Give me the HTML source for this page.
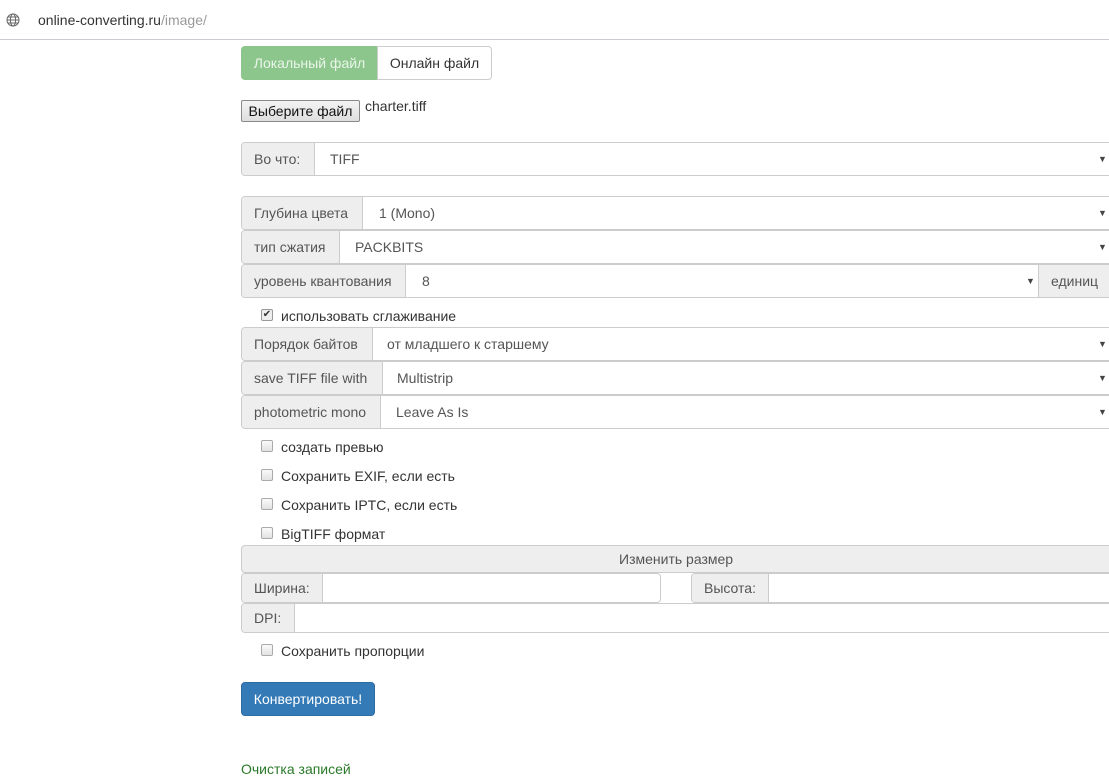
<!DOCTYPE html>
<html><head><meta charset="utf-8"><style>
*{box-sizing:border-box;margin:0;padding:0}
body{width:1109px;height:766px;overflow:hidden;background:#fff;font-family:"Liberation Sans",Arial,sans-serif;font-size:14px;color:#333;position:relative}
.a{position:absolute}
.bar{left:0;top:0;width:1109px;height:40px;border-bottom:1px solid #c8ccd0;background:#fff}
.row{position:absolute;left:241px;width:880px;height:34px;border:1px solid #ccc;border-radius:4px;overflow:hidden;background:#fff;color:#555}
.row .ad{position:absolute;left:0;top:0;bottom:0;background:#eee;border-right:1px solid #ccc;padding-left:12px;line-height:32px}
.row .v{position:absolute;top:0;line-height:32px}
.row .ar{position:absolute;top:0;line-height:32px;font-size:9px;color:#444}
.cb{position:absolute;left:261px;width:12px;height:12px;border:1px solid #aaa;border-radius:2px;background:linear-gradient(#fafafa,#e2e2e2)}
.lb{position:absolute;left:281px;color:#333}
</style></head><body>
<div class="a bar"></div>
<svg class="a" style="left:6px;top:13px" width="14" height="14" viewBox="0 0 14 14" fill="none" stroke="#666" stroke-width="1"><circle cx="7" cy="7" r="6"/><ellipse cx="7" cy="7" rx="2.6" ry="6"/><path d="M1 7h12M2 4h10M2 10h10"/></svg>
<div class="a" style="left:38px;top:12px;font-size:14px;color:#333">online-converting.ru<span style="color:#999">/image/</span></div>

<div class="a" style="left:241px;top:46px;width:137px;height:34px;background:#8cc68c;border-radius:4px 0 0 4px;color:#eaf5ea;line-height:34px;text-align:center">Локальный файл</div>
<div class="a" style="left:377px;top:46px;width:115px;height:34px;border:1px solid #ccc;border-radius:0 4px 4px 0;line-height:32px;text-align:center;color:#333">Онлайн файл</div>

<div class="a" style="left:241px;top:100px;width:119px;height:22px;border:1px solid #8a8a8a;background:linear-gradient(#f4f4f4,#dedede);line-height:20px;text-align:center;color:#111;border-radius:2px">Выберите файл</div>
<div class="a" style="left:365px;top:98px;color:#333">charter.tiff</div>

<div class="row" style="top:142px"><div class="ad" style="width:73px">Во что:</div><div class="v" style="left:88px">TIFF</div><div class="ar" style="left:856px">▼</div></div>
<div class="row" style="top:196px"><div class="ad" style="width:121px">Глубина цвета</div><div class="v" style="left:137px">1 (Mono)</div><div class="ar" style="left:856px">▼</div></div>
<div class="row" style="top:230px"><div class="ad" style="width:98px">тип сжатия</div><div class="v" style="left:113px">PACKBITS</div><div class="ar" style="left:856px">▼</div></div>
<div class="row" style="top:264px"><div class="ad" style="width:164px">уровень квантования</div><div class="v" style="left:180px">8</div><div class="ar" style="left:784px">▼</div><div class="ad" style="left:796px;width:90px;border-left:1px solid #ccc;border-right:none">единиц</div></div>

<div class="a" style="left:261px;top:309px;width:12px;height:12px;border:1px solid #999;border-radius:2px;background:#eee;font-size:10px;line-height:10px;text-align:center;color:#333">✔</div>
<div class="lb" style="top:308px">использовать сглаживание</div>

<div class="row" style="top:327px"><div class="ad" style="width:131px">Порядок байтов</div><div class="v" style="left:145px">от младшего к старшему</div><div class="ar" style="left:856px">▼</div></div>
<div class="row" style="top:361px"><div class="ad" style="width:141px">save TIFF file with</div><div class="v" style="left:155px">Multistrip</div><div class="ar" style="left:856px">▼</div></div>
<div class="row" style="top:395px"><div class="ad" style="width:139px">photometric mono</div><div class="v" style="left:154px">Leave As Is</div><div class="ar" style="left:856px">▼</div></div>

<div class="cb" style="top:440px"></div><div class="lb" style="top:439px">создать превью</div>
<div class="cb" style="top:469px"></div><div class="lb" style="top:468px">Сохранить EXIF, если есть</div>
<div class="cb" style="top:498px"></div><div class="lb" style="top:497px">Сохранить IPTC, если есть</div>
<div class="cb" style="top:527px"></div><div class="lb" style="top:526px">BigTIFF формат</div>

<div class="a" style="left:241px;top:545px;width:880px;height:28px;background:#eee;border:1px solid #ccc;border-radius:4px;line-height:26px;color:#555"><span style="position:absolute;left:377px">Изменить размер</span></div>
<div class="a" style="left:241px;top:573px;width:420px;height:30px;border:1px solid #ccc;border-radius:4px;overflow:hidden;color:#555"><div style="position:absolute;left:0;top:0;bottom:0;width:81px;background:#eee;border-right:1px solid #ccc;padding-left:12px;line-height:28px">Ширина:</div></div>
<div class="a" style="left:691px;top:573px;width:430px;height:30px;border:1px solid #ccc;border-radius:4px;overflow:hidden;color:#555"><div style="position:absolute;left:0;top:0;bottom:0;width:77px;background:#eee;border-right:1px solid #ccc;padding-left:12px;line-height:28px">Высота:</div></div>
<div class="a" style="left:241px;top:603px;width:880px;height:30px;border:1px solid #ccc;border-radius:4px;overflow:hidden;color:#555"><div style="position:absolute;left:0;top:0;bottom:0;width:53px;background:#eee;border-right:1px solid #ccc;padding-left:12px;line-height:28px">DPI:</div></div>

<div class="cb" style="top:644px"></div><div class="lb" style="top:643px">Сохранить пропорции</div>

<div class="a" style="left:241px;top:682px;width:134px;height:34px;background:#337ab7;border:1px solid #2e6da4;border-radius:4px;color:#fff;line-height:32px;text-align:center">Конвертировать!</div>
<div class="a" style="left:241px;top:761px;color:#2a7a2a">Очистка записей</div>
</body></html>
